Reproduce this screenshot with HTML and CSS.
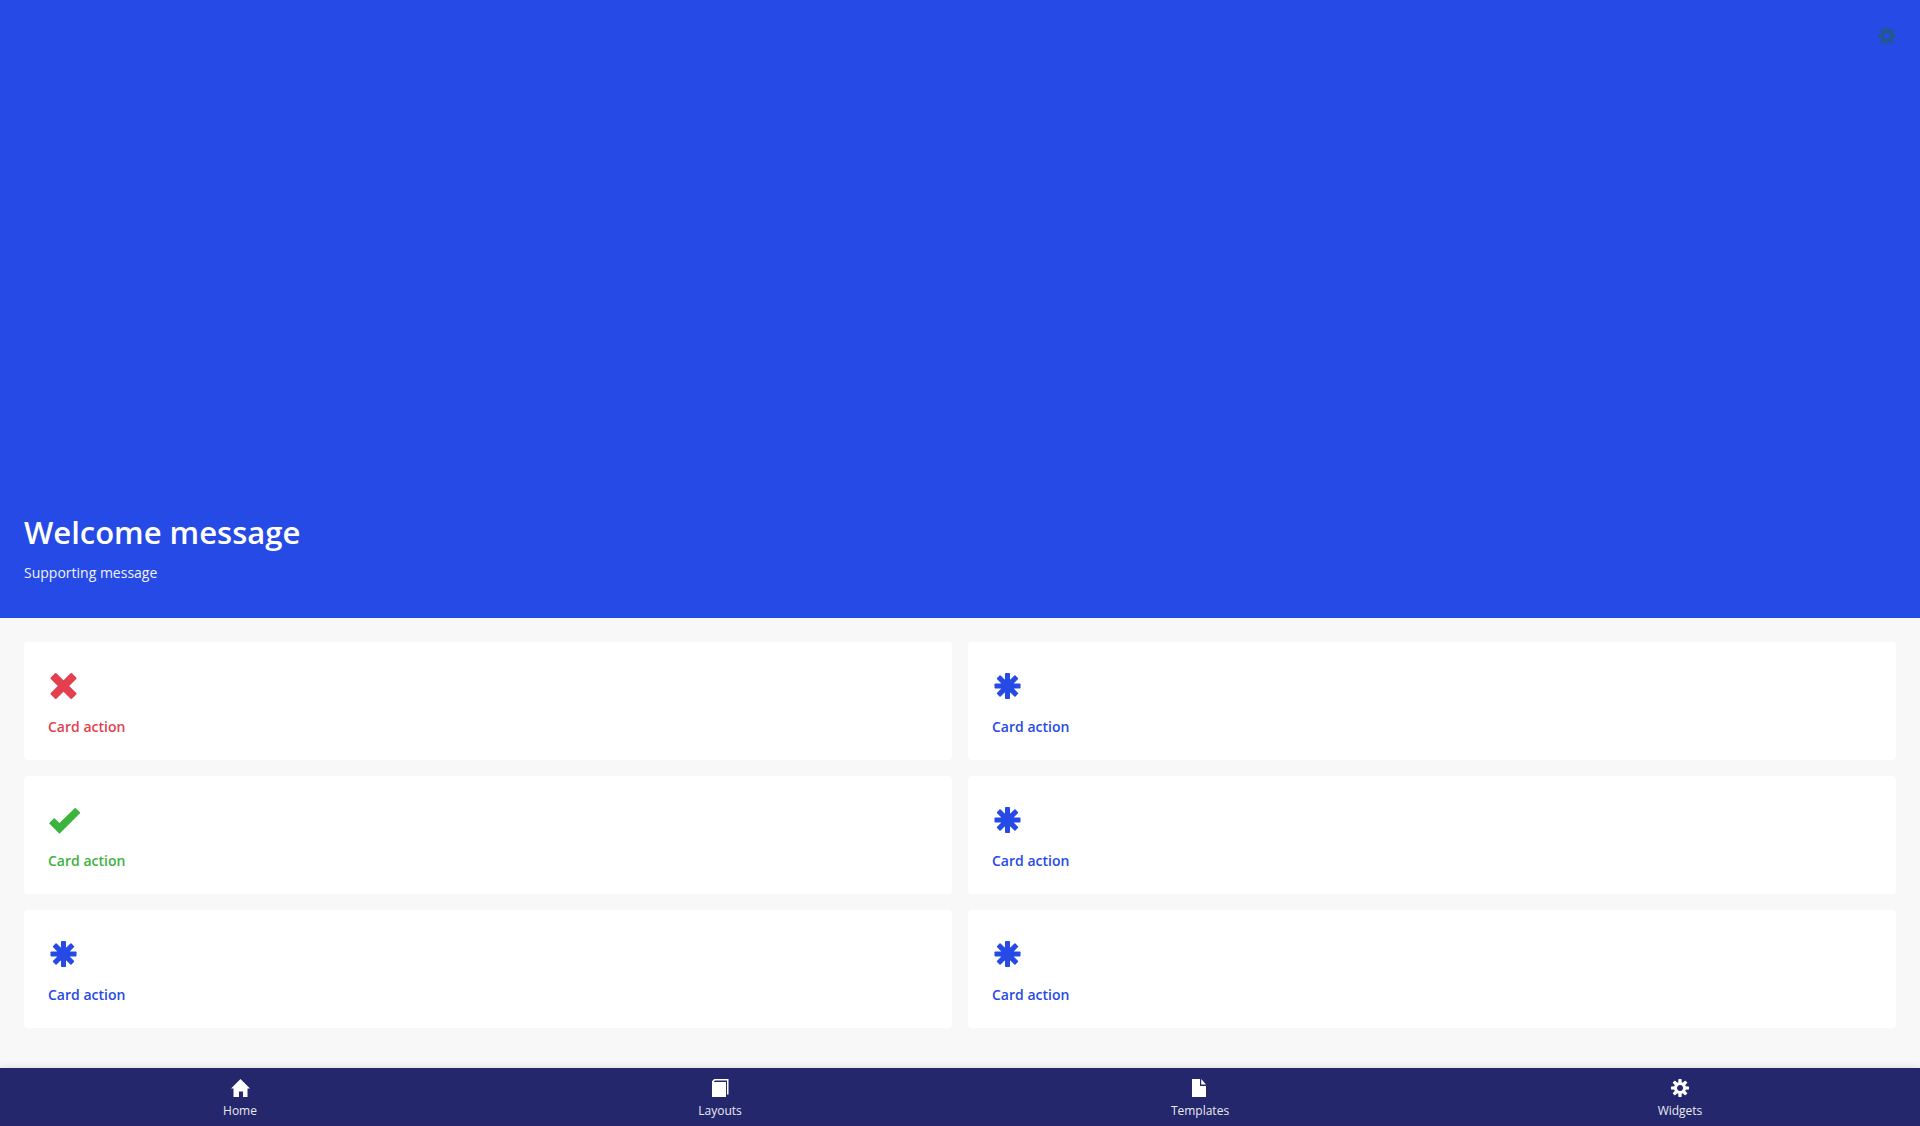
FILE: index.html
```
<!DOCTYPE html>
<html lang="en">
<head>
<meta charset="utf-8">
<meta name="viewport" content="width=device-width, initial-scale=1">
<title>Home</title>
<link rel="stylesheet" href="styles.css">
</head>
<body>
<svg class="sprite" aria-hidden="true">
  <symbol id="gear" viewBox="0 0 18 18">
    <circle cx="9" cy="9" r="4.500" fill="none" stroke="currentColor" stroke-width="3"/>
    <path id="tooth" d="M7.200 3.800 7.400 .5Q7.500 0 8 0H10Q10.500 0 10.600 .5L10.800 3.800z"/>
    <use href="#tooth" transform="rotate(45 9 9)"/>
    <use href="#tooth" transform="rotate(90 9 9)"/>
    <use href="#tooth" transform="rotate(135 9 9)"/>
    <use href="#tooth" transform="rotate(180 9 9)"/>
    <use href="#tooth" transform="rotate(225 9 9)"/>
    <use href="#tooth" transform="rotate(270 9 9)"/>
    <use href="#tooth" transform="rotate(315 9 9)"/>
  </symbol>
  <symbol id="asterisk" viewBox="0.5 0 32 32">
    <rect x="13.500" y="3" width="5" height="26" rx=".8"/>
    <rect x="3" y="13.500" width="26" height="5" rx=".8"/>
    <rect x="13.500" y="3" width="5" height="26" rx=".8" transform="rotate(45 16 16)"/>
    <rect x="13.500" y="3" width="5" height="26" rx=".8" transform="rotate(-45 16 16)"/>
    <circle cx="16" cy="16" r="7"/>
  </symbol>
  <symbol id="cross" viewBox="0.5 0 32 32">
    <rect x="12" y="1" width="8" height="30" rx="1" transform="rotate(45 16 16)"/>
    <rect x="12" y="1" width="8" height="30" rx="1" transform="rotate(-45 16 16)"/>
  </symbol>
  <symbol id="check" viewBox="0 0 32 32">
    <path d="M1 19.300 6.200 14 11.500 19 27.200 3.700 32.500 8.700 11.500 29.800z"/>
  </symbol>
</svg>
<main class="page">
  <header class="hero">
    <button class="settings" type="button" aria-label="Settings"><svg class="icon-small"><use href="#gear"/></svg></button>
    <div class="intro">
      <h1 class="title">Welcome message</h1>
      <p class="subtitle">Supporting message</p>
    </div>
  </header>
  <section class="cards">
    <button class="card danger" type="button"><svg class="icon"><use href="#cross"/></svg><span>Card action</span></button>
    <button class="card" type="button"><svg class="icon"><use href="#asterisk"/></svg><span>Card action</span></button>
    <button class="card success" type="button"><svg class="icon"><use href="#check"/></svg><span>Card action</span></button>
    <button class="card" type="button"><svg class="icon"><use href="#asterisk"/></svg><span>Card action</span></button>
    <button class="card" type="button"><svg class="icon"><use href="#asterisk"/></svg><span>Card action</span></button>
    <button class="card" type="button"><svg class="icon"><use href="#asterisk"/></svg><span>Card action</span></button>
  </section>
</main>
<nav class="tabs">
  <a class="tab" href="#home"><svg class="icon-small" viewBox="-0.5 0 18 18"><path d="M9 0 18.500 9.500H16V18h-4.500v-5.500h-4V18H2V9.500H-.5z"/></svg><span>Home</span></a>
  <a class="tab" href="#layouts"><svg class="icon-small" viewBox="0 0 18 18"><path d="M3.200 0H17.500V15.500H16V1.400H4L2.600 3H15V18H1V2.300z"/></svg><span>Layouts</span></a>
  <a class="tab" href="#templates"><svg class="icon-small" viewBox="0 0 18 18"><path d="M1 0H9V7H15V18H1z"/><path d="M10.200 0 15 5.500H10.200z"/></svg><span>Templates</span></a>
  <a class="tab" href="#widgets"><svg class="icon-small"><use href="#gear"/></svg><span>Widgets</span></a>
</nav>
</body>
</html>
```
FILE: styles.css
```
* {
  box-sizing: border-box;
}

body {
  display: flex;
  flex-direction: column;
  min-height: 100vh;
  margin: 0;
  background: #f8f8f8;
  font-family: "Open Sans", sans-serif;
  font-size: 14px;
}

.sprite {
  position: absolute;
  width: 0;
  height: 0;
}

.page {
  display: flex;
  flex: 1;
  flex-direction: column;
}

.hero {
  display: flex;
  flex: 1;
  flex-direction: column;
  justify-content: space-between;
  padding: 27px 24px 33px;
  background: #264ae5;
  color: #fff;
}

.settings {
  align-self: flex-end;
  padding: 0;
  border: 0;
  background: none;
  color: #25568c;
  cursor: pointer;
}

.icon-small {
  display: block;
  width: 18px;
  height: 18px;
  fill: currentColor;
  overflow: visible;
}

.title {
  margin: 0 0 9px;
  font-size: 31px;
  font-weight: 600;
  line-height: 40px;
}

.subtitle {
  margin: 0;
  color: #f0f2fd;
  font-size: 14px;
  line-height: 24px;
}

.cards {
  display: grid;
  grid-template-columns: 1fr 1fr;
  gap: 16px;
  padding: 24px 24px 40px;
}

.card {
  display: flex;
  flex-direction: column;
  align-items: flex-start;
  gap: 14px;
  padding: 28px 24px 23px;
  border: 0;
  border-radius: 4px;
  background: #fff;
  color: #264ae5;
  font: 600 14px/21px "Open Sans", sans-serif;
  text-align: left;
  cursor: pointer;
}

.danger {
  color: #e33f4e;
}

.success {
  color: #3cb33d;
}

.icon {
  width: 32px;
  height: 32px;
  fill: currentColor;
  overflow: visible;
}

.tabs {
  position: sticky;
  bottom: 0;
  display: flex;
  height: 58px;
  background: #24276c;
  box-shadow: 0 0 8px rgba(0, 0, 0, 0.12);
}

.tab {
  display: flex;
  flex: 1;
  flex-direction: column;
  align-items: center;
  gap: 5px;
  padding-top: 11px;
  color: #fff;
  font-size: 12px;
  line-height: 18px;
  text-decoration: none;
}

.tab span {
  color: #e9e9f0;
}
```
